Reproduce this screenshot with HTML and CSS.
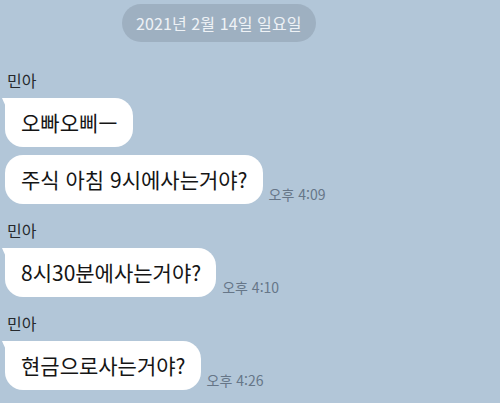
FILE: index.html
```html
<!DOCTYPE html>
<html lang="ko">
<head>
  <meta charset="UTF-8" />
  <meta name="viewport" content="width=device-width, initial-scale=1.0"/>
  <title>민아</title>
  <link rel="stylesheet" href="styles.css">
</head>
<body>
  <div class="chat">
    <div class="date-row">
      <span class="date-pill">2021년 2월 14일 일요일</span>
    </div>

    <div class="group">
      <div class="name">민아</div>
      <div class="messages">
        <div class="msg">
          <div class="bubble first">오빠오삐ㅡ</div>
        </div>
        <div class="msg">
          <div class="bubble">주식 아침 9시에사는거야?</div>
          <span class="time">오후 4:09</span>
        </div>
      </div>
    </div>

    <div class="group">
      <div class="name">민아</div>
      <div class="messages">
        <div class="msg">
          <div class="bubble first">8시30분에사는거야?</div>
          <span class="time">오후 4:10</span>
        </div>
      </div>
    </div>

    <div class="group">
      <div class="name">민아</div>
      <div class="messages">
        <div class="msg">
          <div class="bubble first">현금으로사는거야?</div>
          <span class="time">오후 4:26</span>
        </div>
      </div>
    </div>
  </div>
</body>
</html>
```

FILE: styles.css
```css
body {
  margin: 0;
  padding: 0;
  height: 100vh;
  background: #b2c6d8;
  font-family: "Noto Sans CJK KR", "Noto Sans", sans-serif;
  color: #151515;
  overflow: hidden;
}

.chat {
  padding: 4px 0 0 5px;
}

.date-row {
  display: flex;
  padding-left: 117px;
}

.date-pill {
  display: inline-block;
  height: 38px;
  line-height: 38px;
  padding: 0 14px;
  border-radius: 19px;
  background: #9eb0c1;
  color: #eef2f6;
  font-size: 16px;
  letter-spacing: 0.1px;
}

.group {
  margin-top: 16px;
}

.date-row + .group {
  margin-top: 28px;
}

.name {
  padding-left: 2px;
  font-size: 16px;
  line-height: 21px;
  color: #26292d;
  margin-bottom: 7px;
}

.messages {
  display: flex;
  flex-direction: column;
  gap: 8px;
}

.msg {
  display: flex;
  align-items: flex-end;
}

.bubble {
  position: relative;
  background: #fff;
  border-radius: 18px;
  padding: 12px 15px 12px 16px;
  font-size: 21px;
  line-height: 25px;
  white-space: nowrap;
}

.bubble.first {
  border-top-left-radius: 6px;
}

.bubble.first::before {
  content: "";
  position: absolute;
  left: -3px;
  top: 0;
  width: 10px;
  height: 9px;
  background: #fff;
  clip-path: polygon(0 0, 100% 0, 100% 100%, 40% 100%);
}

.time {
  margin: 0 0 2px 6px;
  font-size: 14px;
  line-height: 16px;
  color: #667688;
  white-space: nowrap;
}
```
